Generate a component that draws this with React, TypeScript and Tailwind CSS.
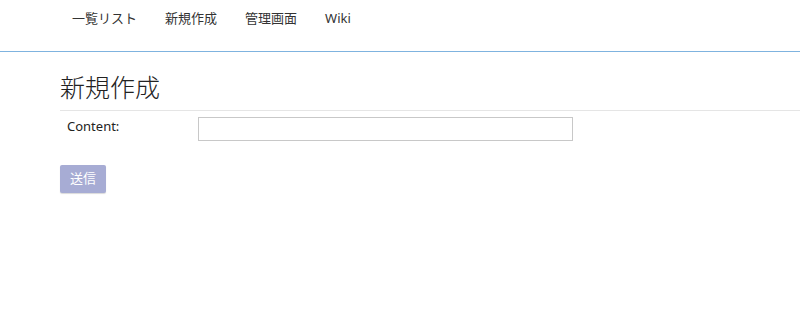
import React from 'react';

const navItems = ['一覧リスト', '新規作成', '管理画面', 'Wiki'];

export default function App() {
  return (
    <div
      className="min-h-[320px] bg-white text-[#222]"
      style={{ fontFamily: '"Noto Sans", "Noto Sans CJK JP", sans-serif' }}
    >
      <nav className="h-[52px] border-b border-[#7fb3df]">
        <ul className="flex pl-[58px] pt-[9px]">
          {navItems.map((item) => (
            <li key={item} className="px-[14px] text-[13px] leading-[18px] text-[#333]">
              {item}
            </li>
          ))}
        </ul>
      </nav>

      <main className="pl-[60px]">
        <h1 className="pt-[18px] pb-[6px] text-[25px] leading-[34px] font-light text-[#222]">新規作成</h1>
        <div className="border-t border-[#e5e5e5]" />
        <div className="flex items-center pt-[6px]">
          <label className="w-[138px] pl-[7px] pb-[5px] text-[13px] text-[#222]">Content:</label>
          <input
            type="text"
            className="h-[24px] w-[375px] border border-[#c8c8c8] bg-white outline-none"
          />
        </div>
        <button
          type="button"
          className="mt-[23px] h-[28px] w-[46px] rounded-[2px] bg-[#a7acd4] text-[13px] text-white shadow-[0_1px_1px_rgba(0,0,0,0.15)]"
        >
          送信
        </button>
      </main>
    </div>
  );
}
